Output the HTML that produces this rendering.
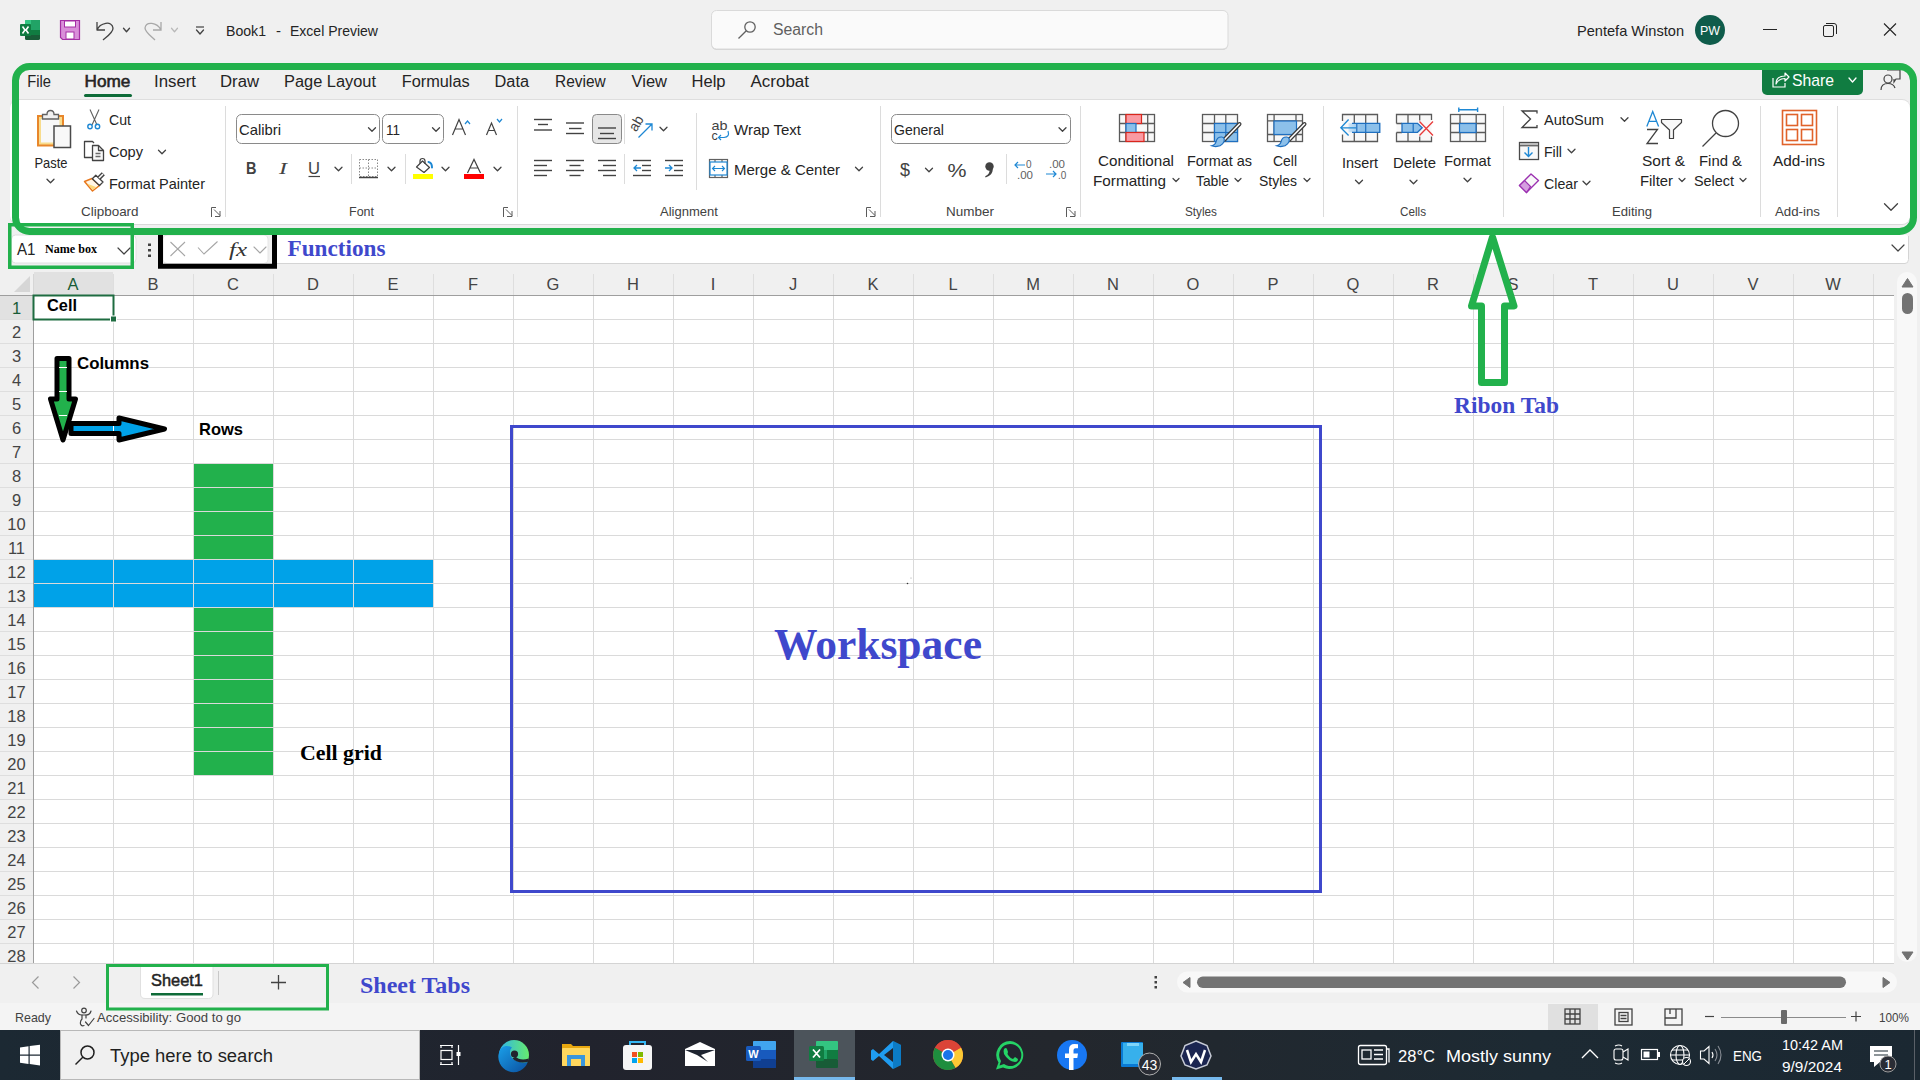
<!DOCTYPE html>
<html><head><meta charset="utf-8"><title>Excel</title>
<style>html,body{margin:0;padding:0;width:1920px;height:1080px;overflow:hidden;background:#f0f0f0;font-family:"Liberation Sans",sans-serif;}svg{display:block}</style>
</head><body>
<svg width="1920" height="1080" viewBox="0 0 1920 1080">
<rect x="0" y="0" width="1920" height="1080" fill="#f0f0f0" />
<g transform="translate(20,20)"><rect x="5" y="0" width="15" height="20" rx="1.5" fill="#185c37"/><rect x="5" y="0" width="15" height="5" rx="1" fill="#33c481"/><rect x="11" y="0" width="9" height="10" fill="#21a366"/><rect x="11" y="10" width="9" height="5" fill="#107c41"/><rect x="0" y="4" width="11" height="12" rx="1" fill="#107c41"/><path d="M2.5 6.5 L5 10 L2.5 13.5 M8.5 6.5 L6 10 L8.5 13.5" stroke="#fff" stroke-width="1.6" fill="none"/></g>
<g transform="translate(60,20)"><path d="M0.5 0.5 H19.5 V19.5 H2.5 L0.5 17.5 Z" fill="#d98fd9" stroke="#a52fa5" stroke-width="1.2"/><rect x="4.5" y="1" width="11" height="6" fill="#fff" stroke="#a52fa5" stroke-width="1"/><rect x="6" y="12" width="8" height="7" fill="#fff" stroke="#a52fa5" stroke-width="1"/></g>
<path d="M97 22 V30 H105 M97 30 C100 23 112 20 113 28 C113.5 32 108 36 103 40" fill="none" stroke="#424242" stroke-width="1.3" stroke-linejoin="round"/>
<path d="M123.5 28.25 L126.5 31.75 L129.5 28.25" fill="none" stroke="#424242" stroke-width="1.3" stroke-linecap="round" stroke-linejoin="round"/>
<path d="M161 22 V30 H153 M161 30 C157 22 146 21 145 28 C145 32 151 36 155 40" fill="none" stroke="#a8a8a8" stroke-width="1.3" />
<path d="M171.5 28.25 L174.5 31.75 L177.5 28.25" fill="none" stroke="#b8b8b8" stroke-width="1.2" stroke-linecap="round" stroke-linejoin="round"/>
<line x1="196" y1="27" x2="204" y2="27" stroke="#424242" stroke-width="1.2" />
<path d="M196.5 30.0 L200 34.0 L203.5 30.0" fill="none" stroke="#424242" stroke-width="1.3" stroke-linecap="round" stroke-linejoin="round"/>
<text x="226" y="36" font-family="Liberation Sans" font-size="15" fill="#242424" font-weight="normal" text-anchor="start" textLength="40" lengthAdjust="spacingAndGlyphs" >Book1</text>
<text x="276" y="36" font-family="Liberation Sans" font-size="15" fill="#242424" font-weight="normal" text-anchor="start" >-</text>
<text x="290" y="36" font-family="Liberation Sans" font-size="15" fill="#242424" font-weight="normal" text-anchor="start" textLength="88" lengthAdjust="spacingAndGlyphs" >Excel Preview</text>
<rect x="711.5" y="11.5" width="516.5" height="38.5" fill="#d2d2d2" rx="5" />
<rect x="711.5" y="10.5" width="516.5" height="38.5" fill="#fafafa" stroke="#dadada" stroke-width="1" rx="5" />
<g stroke="#616161" stroke-width="1.3" fill="none"><circle cx="750" cy="27" r="5.2"/><line x1="746.3" y1="30.7" x2="738.5" y2="38.5"/></g>
<text x="773" y="35" font-family="Liberation Sans" font-size="16" fill="#5f5f5f" font-weight="normal" text-anchor="start" textLength="50" lengthAdjust="spacingAndGlyphs" >Search</text>
<text x="1577" y="36" font-family="Liberation Sans" font-size="15" fill="#242424" font-weight="normal" text-anchor="start" textLength="107" lengthAdjust="spacingAndGlyphs" >Pentefa Winston</text>
<circle cx="1710" cy="30" r="15" fill="#0f5c4b"/>
<text x="1700" y="34.5" font-family="Liberation Sans" font-size="12.5" fill="#ffffff" font-weight="normal" text-anchor="start" textLength="20" lengthAdjust="spacingAndGlyphs" >PW</text>
<line x1="1763" y1="29.5" x2="1777" y2="29.5" stroke="#242424" stroke-width="1" />
<g fill="none" stroke="#242424" stroke-width="1"><rect x="1823.5" y="25.5" width="10" height="11" rx="1.5"/><path d="M1826 23.5 H1834 Q1836.5 23.5 1836.5 26 V34"/></g>
<path d="M1884 23.5 L1896 35.5 M1896 23.5 L1884 35.5" fill="none" stroke="#242424" stroke-width="1.1" />
<text x="27.3" y="87" font-family="Liberation Sans" font-size="16" fill="#242424" font-weight="normal" text-anchor="start" textLength="23.7" lengthAdjust="spacingAndGlyphs" >File</text>
<text x="84.6" y="87" font-family="Liberation Sans" font-size="16" fill="#242424" font-weight="normal" text-anchor="start" textLength="45.8" lengthAdjust="spacingAndGlyphs" stroke="#242424" stroke-width="0.55">Home</text>
<text x="154" y="87" font-family="Liberation Sans" font-size="16" fill="#242424" font-weight="normal" text-anchor="start" textLength="42" lengthAdjust="spacingAndGlyphs" >Insert</text>
<text x="220" y="87" font-family="Liberation Sans" font-size="16" fill="#242424" font-weight="normal" text-anchor="start" textLength="39" lengthAdjust="spacingAndGlyphs" >Draw</text>
<text x="284" y="87" font-family="Liberation Sans" font-size="16" fill="#242424" font-weight="normal" text-anchor="start" textLength="92" lengthAdjust="spacingAndGlyphs" >Page Layout</text>
<text x="401.7" y="87" font-family="Liberation Sans" font-size="16" fill="#242424" font-weight="normal" text-anchor="start" textLength="68" lengthAdjust="spacingAndGlyphs" >Formulas</text>
<text x="494.5" y="87" font-family="Liberation Sans" font-size="16" fill="#242424" font-weight="normal" text-anchor="start" textLength="34.5" lengthAdjust="spacingAndGlyphs" >Data</text>
<text x="555" y="87" font-family="Liberation Sans" font-size="16" fill="#242424" font-weight="normal" text-anchor="start" textLength="50.7" lengthAdjust="spacingAndGlyphs" >Review</text>
<text x="631.5" y="87" font-family="Liberation Sans" font-size="16" fill="#242424" font-weight="normal" text-anchor="start" textLength="35.5" lengthAdjust="spacingAndGlyphs" >View</text>
<text x="691.5" y="87" font-family="Liberation Sans" font-size="16" fill="#242424" font-weight="normal" text-anchor="start" textLength="34" lengthAdjust="spacingAndGlyphs" >Help</text>
<text x="750.5" y="87" font-family="Liberation Sans" font-size="16" fill="#242424" font-weight="normal" text-anchor="start" textLength="58.5" lengthAdjust="spacingAndGlyphs" >Acrobat</text>
<rect x="84" y="94" width="48" height="3" fill="#0e6b38" rx="1.5" />
<rect x="1762" y="64" width="101" height="31" fill="#107c41" rx="5" />
<g stroke="#fff" stroke-width="1.2" fill="none"><path d="M1773 78 V87 H1785 V83"/><path d="M1776 84 C1776 78 1780 76 1785 76 V73 L1789 77 L1785 81 V78.5 C1781 78.5 1778 80 1776 84 Z" stroke-linejoin="round"/></g>
<text x="1792" y="86" font-family="Liberation Sans" font-size="17" fill="#ffffff" font-weight="normal" text-anchor="start" textLength="42" lengthAdjust="spacingAndGlyphs" >Share</text>
<path d="M1849.0 78.0 L1852.5 82.0 L1856.0 78.0" fill="none" stroke="#ffffff" stroke-width="1.3" stroke-linecap="round" stroke-linejoin="round"/>
<g stroke="#424242" stroke-width="1.2" fill="none"><circle cx="1888" cy="79" r="4"/><path d="M1881 90 C1881 85 1884 83.5 1888 83.5 C1892 83.5 1894 85 1895 88"/><path d="M1887 70 H1900 V79 H1896 L1894 82 V79"/></g>
<rect x="10" y="101" width="1900" height="124" rx="8" fill="#d9d9d9"/>
<rect x="10" y="99" width="1900" height="125" fill="#dedede" rx="8" />
<rect x="10" y="100" width="1900" height="124" fill="#ffffff" rx="8" />
<line x1="225.5" y1="106" x2="225.5" y2="217" stroke="#dcdcdc" stroke-width="1" />
<line x1="517.5" y1="106" x2="517.5" y2="217" stroke="#dcdcdc" stroke-width="1" />
<line x1="880.5" y1="106" x2="880.5" y2="217" stroke="#dcdcdc" stroke-width="1" />
<line x1="1080.5" y1="106" x2="1080.5" y2="217" stroke="#dcdcdc" stroke-width="1" />
<line x1="1323.5" y1="106" x2="1323.5" y2="217" stroke="#dcdcdc" stroke-width="1" />
<line x1="1503.5" y1="106" x2="1503.5" y2="217" stroke="#dcdcdc" stroke-width="1" />
<line x1="1760.5" y1="106" x2="1760.5" y2="217" stroke="#dcdcdc" stroke-width="1" />
<line x1="1837.5" y1="106" x2="1837.5" y2="217" stroke="#dcdcdc" stroke-width="1" />
<text x="81" y="216" font-family="Liberation Sans" font-size="13" fill="#424242" font-weight="normal" text-anchor="start" textLength="57.6" lengthAdjust="spacingAndGlyphs" >Clipboard</text>
<text x="349" y="216" font-family="Liberation Sans" font-size="13" fill="#424242" font-weight="normal" text-anchor="start" textLength="25" lengthAdjust="spacingAndGlyphs" >Font</text>
<text x="660" y="216" font-family="Liberation Sans" font-size="13" fill="#424242" font-weight="normal" text-anchor="start" textLength="58" lengthAdjust="spacingAndGlyphs" >Alignment</text>
<text x="946" y="216" font-family="Liberation Sans" font-size="13" fill="#424242" font-weight="normal" text-anchor="start" textLength="48" lengthAdjust="spacingAndGlyphs" >Number</text>
<text x="1185" y="216" font-family="Liberation Sans" font-size="13" fill="#424242" font-weight="normal" text-anchor="start" textLength="32" lengthAdjust="spacingAndGlyphs" >Styles</text>
<text x="1400" y="216" font-family="Liberation Sans" font-size="13" fill="#424242" font-weight="normal" text-anchor="start" textLength="26" lengthAdjust="spacingAndGlyphs" >Cells</text>
<text x="1612" y="216" font-family="Liberation Sans" font-size="13" fill="#424242" font-weight="normal" text-anchor="start" textLength="40" lengthAdjust="spacingAndGlyphs" >Editing</text>
<text x="1775" y="216" font-family="Liberation Sans" font-size="13" fill="#424242" font-weight="normal" text-anchor="start" textLength="45" lengthAdjust="spacingAndGlyphs" >Add-ins</text>
<g stroke="#5a5a5a" stroke-width="1" fill="none"><path d="M211.5 217 V207.5 H216"/><path d="M214 209.5 L220 215.5 M220 211 V216.5 H215"/></g>
<g stroke="#5a5a5a" stroke-width="1" fill="none"><path d="M503.5 217 V207.5 H508"/><path d="M506 209.5 L512 215.5 M512 211 V216.5 H507"/></g>
<g stroke="#5a5a5a" stroke-width="1" fill="none"><path d="M866.5 217 V207.5 H871"/><path d="M869 209.5 L875 215.5 M875 211 V216.5 H870"/></g>
<g stroke="#5a5a5a" stroke-width="1" fill="none"><path d="M1066.5 217 V207.5 H1071"/><path d="M1069 209.5 L1075 215.5 M1075 211 V216.5 H1070"/></g>
<path d="M1884.5 203.75 L1891 210.25 L1897.5 203.75" fill="none" stroke="#424242" stroke-width="1.3" stroke-linecap="round" stroke-linejoin="round"/>
<g><rect x="38" y="116" width="25" height="29.5" fill="#f8dc8c" stroke="#e8862a" stroke-width="2"/><rect x="41" y="119" width="18.5" height="23.5" fill="#f8f8f8"/><path d="M42.5 119 V114.5 H47 Q47 110.5 50.5 110.5 Q54 110.5 54 114.5 H58.5 V119 Z" fill="#f0f0f0" stroke="#616161" stroke-width="1.3"/><rect x="54" y="126" width="16.5" height="21.5" fill="#f8f8f8" stroke="#4a4a4a" stroke-width="1.5"/></g>
<text x="34.5" y="168" font-family="Liberation Sans" font-size="15" fill="#242424" font-weight="normal" text-anchor="start" textLength="33" lengthAdjust="spacingAndGlyphs" >Paste</text>
<path d="M47.0 179.25 L50.5 182.75 L54.0 179.25" fill="none" stroke="#424242" stroke-width="1.3" stroke-linecap="round" stroke-linejoin="round"/>
<g stroke="#616161" stroke-width="1.1" fill="none"><path d="M90 109.5 L97 125 M99 109.5 L92 125"/></g><g stroke="#1e88d4" stroke-width="1.4" fill="none"><circle cx="90" cy="126.5" r="2.2"/><circle cx="97.5" cy="126.5" r="2.2"/></g>
<text x="109" y="125" font-family="Liberation Sans" font-size="15" fill="#242424" font-weight="normal" text-anchor="start" textLength="22" lengthAdjust="spacingAndGlyphs" >Cut</text>
<g stroke="#424242" stroke-width="1.3" fill="none" stroke-linejoin="round"><path d="M92.5 157.5 H84.5 V141.5 H92.5 L94 143"/><path d="M92.5 145.5 H98.5 L103.5 150.5 V160.5 H92.5 Z" fill="#f8f8f8"/><path d="M98.5 145.5 V150.5 H103.5"/><path d="M95.5 153.5 H100.5 M95.5 156.5 H100.5" stroke="#6a6a6a"/></g>
<text x="109" y="157" font-family="Liberation Sans" font-size="15" fill="#242424" font-weight="normal" text-anchor="start" textLength="34" lengthAdjust="spacingAndGlyphs" >Copy</text>
<path d="M158.5 150.25 L162 153.75 L165.5 150.25" fill="none" stroke="#424242" stroke-width="1.3" stroke-linecap="round" stroke-linejoin="round"/>
<g stroke-linejoin="round"><path d="M84.5 181.5 L92 178.5 L99.5 185.5 L92.5 191 Z" fill="#fff6e6" stroke="#e8781e" stroke-width="1.5"/><path d="M87 183.5 L96.5 187.2 L92.5 189.8 Z" fill="#fcd87a"/><path d="M92.3 178.7 L95.8 175.2 L103 182 L99.5 185.5 Z" fill="#fff" stroke="#424242" stroke-width="1.3"/><path d="M98.8 178.3 L103.3 173.8" stroke="#424242" stroke-width="4.4"/><path d="M99 178 L103 174" stroke="#ffffff" stroke-width="1.6"/></g>
<text x="109" y="189" font-family="Liberation Sans" font-size="15" fill="#242424" font-weight="normal" text-anchor="start" textLength="96" lengthAdjust="spacingAndGlyphs" >Format Painter</text>
<rect x="236.5" y="114.5" width="143" height="29" fill="#fff" stroke="#8a8a8a" stroke-width="1" rx="5" />
<text x="239" y="135" font-family="Liberation Sans" font-size="15" fill="#242424" font-weight="normal" text-anchor="start" textLength="42" lengthAdjust="spacingAndGlyphs" >Calibri</text>
<path d="M368.5 127.75 L372 131.25 L375.5 127.75" fill="none" stroke="#424242" stroke-width="1.3" stroke-linecap="round" stroke-linejoin="round"/>
<rect x="382.5" y="114.5" width="61" height="29" fill="#fff" stroke="#8a8a8a" stroke-width="1" rx="5" />
<text x="386" y="135" font-family="Liberation Sans" font-size="15" fill="#242424" font-weight="normal" text-anchor="start" textLength="14" lengthAdjust="spacingAndGlyphs" >11</text>
<path d="M432.5 127.75 L436 131.25 L439.5 127.75" fill="none" stroke="#424242" stroke-width="1.3" stroke-linecap="round" stroke-linejoin="round"/>
<path d="M452.5 135 L459 119.5 L465.5 135 M455 129 H463" fill="none" stroke="#424242" stroke-width="1.2" />
<path d="M465 124 L467.5 121 L470 124" fill="none" stroke="#1e88d4" stroke-width="1.2" />
<path d="M486.5 135 L491.5 123 L496.5 135 M488.5 130.5 H494.5" fill="none" stroke="#424242" stroke-width="1.2" />
<path d="M497 119 L499.5 122 L502 119" fill="none" stroke="#1e88d4" stroke-width="1.2" />
<text x="246" y="173.5" font-family="Liberation Sans" font-size="17" fill="#424242" font-weight="bold" text-anchor="start" textLength="10.5" lengthAdjust="spacingAndGlyphs" >B</text>
<text x="279" y="173.5" font-family="Liberation Serif" font-size="17" fill="#424242" font-weight="normal" text-anchor="start" textLength="8" lengthAdjust="spacingAndGlyphs" font-style="italic" >I</text>
<text x="308" y="173.5" font-family="Liberation Sans" font-size="16" fill="#424242" font-weight="normal" text-anchor="start" textLength="12" lengthAdjust="spacingAndGlyphs" >U</text>
<line x1="308.5" y1="176.5" x2="320" y2="176.5" stroke="#424242" stroke-width="1.2" />
<path d="M335.0 167.25 L338.5 170.75 L342.0 167.25" fill="none" stroke="#424242" stroke-width="1.3" stroke-linecap="round" stroke-linejoin="round"/>
<line x1="351.5" y1="154" x2="351.5" y2="184" stroke="#dcdcdc" stroke-width="1" />
<g stroke="#8a8a8a" stroke-width="1" stroke-dasharray="1.5 1.5" fill="none"><rect x="359.5" y="159.5" width="18" height="17"/><line x1="368.5" y1="159.5" x2="368.5" y2="176.5"/><line x1="359.5" y1="168" x2="377.5" y2="168"/></g>
<line x1="359" y1="177.5" x2="378" y2="177.5" stroke="#424242" stroke-width="1.5" />
<path d="M388.0 167.25 L391.5 170.75 L395.0 167.25" fill="none" stroke="#424242" stroke-width="1.3" stroke-linecap="round" stroke-linejoin="round"/>
<line x1="405.5" y1="154" x2="405.5" y2="184" stroke="#dcdcdc" stroke-width="1" />
<path d="M416.5 167 L422.5 161 L429.5 167.5 L424 172.5 Z" fill="#fff" stroke="#424242" stroke-width="1.2" stroke-linejoin="round"/><path d="M420 163.5 V161 Q420 158.5 422.5 158.5 Q425 158.5 425 161 V164" fill="none" stroke="#424242" stroke-width="1.2"/><path d="M428.5 162 Q432 162.5 432 167.5" stroke="#1e88d4" stroke-width="2" fill="none" stroke-linecap="round"/>
<rect x="413" y="174" width="20" height="5" fill="#ffff00" />
<path d="M442.0 167.25 L445.5 170.75 L449.0 167.25" fill="none" stroke="#424242" stroke-width="1.3" stroke-linecap="round" stroke-linejoin="round"/>
<path d="M467.5 173 L474 159.5 L480.5 173 M470 168 H478" fill="none" stroke="#424242" stroke-width="1.2" />
<rect x="464" y="174" width="20" height="5" fill="#ff0000" />
<path d="M494.0 167.25 L497.5 170.75 L501.0 167.25" fill="none" stroke="#424242" stroke-width="1.3" stroke-linecap="round" stroke-linejoin="round"/>
<line x1="534" y1="119.5" x2="552" y2="119.5" stroke="#424242" stroke-width="1.4" />
<line x1="538" y1="124.5" x2="548" y2="124.5" stroke="#424242" stroke-width="1.4" />
<line x1="534" y1="130" x2="552" y2="130" stroke="#424242" stroke-width="1.4" />
<line x1="566" y1="123" x2="584" y2="123" stroke="#424242" stroke-width="1.4" />
<line x1="569" y1="128.5" x2="581.5" y2="128.5" stroke="#424242" stroke-width="1.4" />
<line x1="566" y1="133.5" x2="584" y2="133.5" stroke="#424242" stroke-width="1.4" />
<rect x="592.5" y="114.5" width="29" height="29" fill="#e6e6e6" stroke="#8a8a8a" stroke-width="1" rx="4" />
<line x1="598" y1="128" x2="616" y2="128" stroke="#424242" stroke-width="1.4" />
<line x1="600" y1="133.5" x2="614" y2="133.5" stroke="#424242" stroke-width="1.4" />
<line x1="598" y1="138.5" x2="616" y2="138.5" stroke="#424242" stroke-width="1.4" />
<line x1="624.5" y1="114" x2="624.5" y2="144" stroke="#dcdcdc" stroke-width="1" />
<text x="628.5" y="129" font-family="Liberation Sans" font-size="14" fill="#424242" font-weight="normal" text-anchor="start" transform="rotate(-60 635.5 124)">ab</text>
<path d="M638.5 137.5 L651.5 124.5 M645.5 124 H652 V130.5" fill="none" stroke="#1e88d4" stroke-width="1.3" />
<path d="M660.0 127.25 L663.5 130.75 L667.0 127.25" fill="none" stroke="#424242" stroke-width="1.3" stroke-linecap="round" stroke-linejoin="round"/>
<line x1="696.5" y1="113" x2="696.5" y2="190" stroke="#dcdcdc" stroke-width="1" />
<text x="711.5" y="130" font-family="Liberation Sans" font-size="13" fill="#424242" font-weight="normal" text-anchor="start" textLength="16" lengthAdjust="spacingAndGlyphs" >ab</text>
<text x="711.5" y="139.5" font-family="Liberation Sans" font-size="12.5" fill="#424242" font-weight="normal" text-anchor="start" >c</text>
<path d="M728 131 Q730 137 724 137.5 H719 M721 135 L718.5 137.5 L721 140" fill="none" stroke="#1e88d4" stroke-width="1.2" />
<text x="734" y="135" font-family="Liberation Sans" font-size="15" fill="#242424" font-weight="normal" text-anchor="start" textLength="67" lengthAdjust="spacingAndGlyphs" >Wrap Text</text>
<line x1="534" y1="160.5" x2="552" y2="160.5" stroke="#424242" stroke-width="1.4" />
<line x1="534" y1="165.5" x2="547" y2="165.5" stroke="#424242" stroke-width="1.4" />
<line x1="534" y1="170.5" x2="552" y2="170.5" stroke="#424242" stroke-width="1.4" />
<line x1="534" y1="175.5" x2="547" y2="175.5" stroke="#424242" stroke-width="1.4" />
<line x1="566" y1="160.5" x2="584" y2="160.5" stroke="#424242" stroke-width="1.4" />
<line x1="569.5" y1="165.5" x2="580.5" y2="165.5" stroke="#424242" stroke-width="1.4" />
<line x1="566" y1="170.5" x2="584" y2="170.5" stroke="#424242" stroke-width="1.4" />
<line x1="569.5" y1="175.5" x2="580.5" y2="175.5" stroke="#424242" stroke-width="1.4" />
<line x1="598" y1="160.5" x2="616" y2="160.5" stroke="#424242" stroke-width="1.4" />
<line x1="603" y1="165.5" x2="616" y2="165.5" stroke="#424242" stroke-width="1.4" />
<line x1="598" y1="170.5" x2="616" y2="170.5" stroke="#424242" stroke-width="1.4" />
<line x1="603" y1="175.5" x2="616" y2="175.5" stroke="#424242" stroke-width="1.4" />
<line x1="624.5" y1="154" x2="624.5" y2="184" stroke="#dcdcdc" stroke-width="1" />
<line x1="633" y1="160.5" x2="651" y2="160.5" stroke="#424242" stroke-width="1.4" />
<line x1="642" y1="165.5" x2="651" y2="165.5" stroke="#424242" stroke-width="1.4" />
<line x1="642" y1="170.5" x2="651" y2="170.5" stroke="#424242" stroke-width="1.4" />
<line x1="633" y1="175.5" x2="651" y2="175.5" stroke="#424242" stroke-width="1.4" />
<path d="M641 168 H634 M637 165 L634 168 L637 171" fill="none" stroke="#1e88d4" stroke-width="1.3" />
<line x1="665" y1="160.5" x2="683" y2="160.5" stroke="#424242" stroke-width="1.4" />
<line x1="674" y1="165.5" x2="683" y2="165.5" stroke="#424242" stroke-width="1.4" />
<line x1="674" y1="170.5" x2="683" y2="170.5" stroke="#424242" stroke-width="1.4" />
<line x1="665" y1="175.5" x2="683" y2="175.5" stroke="#424242" stroke-width="1.4" />
<path d="M665 168 H672 M669 165 L672 168 L669 171" fill="none" stroke="#1e88d4" stroke-width="1.3" />
<g fill="none" stroke="#616161" stroke-width="1.2"><rect x="709.5" y="159.5" width="18" height="18"/><line x1="715" y1="159.5" x2="715" y2="162"/><line x1="722" y1="159.5" x2="722" y2="162"/><line x1="715" y1="175" x2="715" y2="177.5"/><line x1="722" y1="175" x2="722" y2="177.5"/></g>
<rect x="710" y="162" width="17" height="13" fill="#fff" stroke="#1e88d4" stroke-width="1.2" />
<path d="M712.5 168.5 H724.5 M715 166 L712.5 168.5 L715 171 M722 166 L724.5 168.5 L722 171" fill="none" stroke="#1e88d4" stroke-width="1.1" />
<text x="734" y="175" font-family="Liberation Sans" font-size="15" fill="#242424" font-weight="normal" text-anchor="start" textLength="106" lengthAdjust="spacingAndGlyphs" >Merge &amp; Center</text>
<path d="M855.5 167.25 L859 170.75 L862.5 167.25" fill="none" stroke="#424242" stroke-width="1.3" stroke-linecap="round" stroke-linejoin="round"/>
<rect x="891.5" y="114.5" width="179" height="29" fill="#fff" stroke="#8a8a8a" stroke-width="1" rx="5" />
<text x="894" y="135" font-family="Liberation Sans" font-size="15" fill="#242424" font-weight="normal" text-anchor="start" textLength="50" lengthAdjust="spacingAndGlyphs" >General</text>
<path d="M1059.0 127.75 L1062.5 131.25 L1066.0 127.75" fill="none" stroke="#424242" stroke-width="1.3" stroke-linecap="round" stroke-linejoin="round"/>
<text x="900" y="176" font-family="Liberation Sans" font-size="19" fill="#424242" font-weight="normal" text-anchor="start" textLength="10" lengthAdjust="spacingAndGlyphs" >$</text>
<path d="M925.5 168.25 L929 171.75 L932.5 168.25" fill="none" stroke="#424242" stroke-width="1.3" stroke-linecap="round" stroke-linejoin="round"/>
<text x="947.5" y="177" font-family="Liberation Sans" font-size="19" fill="#424242" font-weight="normal" text-anchor="start" textLength="19" lengthAdjust="spacingAndGlyphs" >%</text>
<circle cx="989.5" cy="166.5" r="4.2" fill="#424242"/><path d="M992.5 168 C993.5 172.5 990.5 176 985.5 177.5 L985.2 176.3 C988.5 174.8 989.8 172.5 989.5 170 Z" fill="#424242"/>
<line x1="1006.5" y1="154" x2="1006.5" y2="184" stroke="#dcdcdc" stroke-width="1" />
<text x="1026" y="168" font-family="Liberation Sans" font-size="10" fill="#616161" font-weight="normal" text-anchor="start" >0</text>
<text x="1017" y="178.5" font-family="Liberation Sans" font-size="10" fill="#616161" font-weight="normal" text-anchor="start" textLength="16" lengthAdjust="spacingAndGlyphs" >.00</text>
<path d="M1015 165 H1025 M1018 162 L1015 165 L1018 168" fill="none" stroke="#1e88d4" stroke-width="1.2" />
<text x="1049" y="168" font-family="Liberation Sans" font-size="10" fill="#616161" font-weight="normal" text-anchor="start" textLength="16" lengthAdjust="spacingAndGlyphs" >.00</text>
<text x="1058" y="178.5" font-family="Liberation Sans" font-size="10" fill="#616161" font-weight="normal" text-anchor="start" >.0</text>
<path d="M1046 174 H1056 M1053 171 L1056 174 L1053 177" fill="none" stroke="#1e88d4" stroke-width="1.2" />
<rect x="1119.5" y="114.5" width="35" height="27" fill="#f8f8f8" stroke="#5a5a5a" stroke-width="1.3" />
<line x1="1147.7" y1="114.5" x2="1147.7" y2="141.5" stroke="#5a5a5a" stroke-width="1.3" />
<line x1="1119.5" y1="123.5" x2="1154.5" y2="123.5" stroke="#5a5a5a" stroke-width="1.3" />
<line x1="1119.5" y1="132.5" x2="1154.5" y2="132.5" stroke="#5a5a5a" stroke-width="1.3" />
<line x1="1126" y1="114.5" x2="1126" y2="141.5" stroke="#5a5a5a" stroke-width="1.3" />
<rect x="1126" y="114.5" width="15.5" height="9" fill="#fa9aa2" stroke="#d9261c" stroke-width="1.2" />
<rect x="1126" y="123.5" width="10" height="9" fill="#8cc0ea" stroke="#1e6fc0" stroke-width="1.2" />
<rect x="1126" y="132.5" width="18" height="9" fill="#fa9aa2" stroke="#d9261c" stroke-width="1.2" />
<text x="1098" y="166" font-family="Liberation Sans" font-size="15" fill="#242424" font-weight="normal" text-anchor="start" textLength="76" lengthAdjust="spacingAndGlyphs" >Conditional</text>
<text x="1093" y="186" font-family="Liberation Sans" font-size="15" fill="#242424" font-weight="normal" text-anchor="start" textLength="73" lengthAdjust="spacingAndGlyphs" >Formatting</text>
<path d="M1173.0 178.5 L1176 181.5 L1179.0 178.5" fill="none" stroke="#424242" stroke-width="1.2" stroke-linecap="round" stroke-linejoin="round"/>
<rect x="1202.5" y="114.5" width="35" height="27" fill="#f8f8f8" stroke="#5a5a5a" stroke-width="1.3" />
<line x1="1214.5" y1="114.5" x2="1214.5" y2="141.5" stroke="#5a5a5a" stroke-width="1.3" />
<line x1="1225.8" y1="114.5" x2="1225.8" y2="141.5" stroke="#5a5a5a" stroke-width="1.3" />
<line x1="1202.5" y1="123.5" x2="1237.5" y2="123.5" stroke="#5a5a5a" stroke-width="1.3" />
<line x1="1202.5" y1="132.5" x2="1237.5" y2="132.5" stroke="#5a5a5a" stroke-width="1.3" />
<rect x="1214.5" y="123.5" width="23" height="18" fill="#8cc0ea" stroke="#1e6fc0" stroke-width="1.2" />
<line x1="1225.8" y1="123.5" x2="1225.8" y2="141.5" stroke="#1e6fc0" stroke-width="1.2" />
<line x1="1214.5" y1="132.5" x2="1237.5" y2="132.5" stroke="#1e6fc0" stroke-width="1.2" />
<path d="M1239.5 124 L1224 140" fill="none" stroke="#3a3a3a" stroke-width="4" stroke-linecap="round"/>
<path d="M1239.5 124 L1224 140" fill="none" stroke="#ffffff" stroke-width="1.6" stroke-linecap="round"/>
<path d="M1211.5 145.8 C 1214.5 147, 1219.5 147, 1222.5 143.8 C 1225.5 140.8, 1224.5 137.2, 1221.8 137 C 1218.5 136.8, 1216.5 139.5, 1216 141.8 C 1215.5 144, 1214 145.2, 1211.5 145.8 Z" fill="#8cc0ea" stroke="#1e6fc0" stroke-width="1.2" />
<text x="1187" y="166" font-family="Liberation Sans" font-size="15" fill="#242424" font-weight="normal" text-anchor="start" textLength="65" lengthAdjust="spacingAndGlyphs" >Format as</text>
<text x="1196" y="186" font-family="Liberation Sans" font-size="15" fill="#242424" font-weight="normal" text-anchor="start" textLength="33" lengthAdjust="spacingAndGlyphs" >Table</text>
<path d="M1235.0 178.5 L1238 181.5 L1241.0 178.5" fill="none" stroke="#424242" stroke-width="1.2" stroke-linecap="round" stroke-linejoin="round"/>
<rect x="1267.5" y="114.5" width="35" height="27" fill="#f8f8f8" stroke="#5a5a5a" stroke-width="1.3" />
<line x1="1274.1" y1="114.5" x2="1274.1" y2="141.5" stroke="#5a5a5a" stroke-width="1.3" />
<line x1="1296.0" y1="114.5" x2="1296.0" y2="141.5" stroke="#5a5a5a" stroke-width="1.3" />
<line x1="1267.5" y1="120.9" x2="1302.5" y2="120.9" stroke="#5a5a5a" stroke-width="1.3" />
<line x1="1267.5" y1="134.5" x2="1302.5" y2="134.5" stroke="#5a5a5a" stroke-width="1.3" />
<rect x="1274" y="121" width="22.5" height="13.5" fill="#8cc0ea" stroke="#1e6fc0" stroke-width="1.2" />
<path d="M1304.5 124 L1289 140" fill="none" stroke="#3a3a3a" stroke-width="4" stroke-linecap="round"/>
<path d="M1304.5 124 L1289 140" fill="none" stroke="#ffffff" stroke-width="1.6" stroke-linecap="round"/>
<path d="M1276.5 145.8 C 1279.5 147, 1284.5 147, 1287.5 143.8 C 1290.5 140.8, 1289.5 137.2, 1286.8 137 C 1283.5 136.8, 1281.5 139.5, 1281 141.8 C 1280.5 144, 1279 145.2, 1276.5 145.8 Z" fill="#8cc0ea" stroke="#1e6fc0" stroke-width="1.2" />
<text x="1273" y="166" font-family="Liberation Sans" font-size="15" fill="#242424" font-weight="normal" text-anchor="start" textLength="24" lengthAdjust="spacingAndGlyphs" >Cell</text>
<text x="1259" y="186" font-family="Liberation Sans" font-size="15" fill="#242424" font-weight="normal" text-anchor="start" textLength="38" lengthAdjust="spacingAndGlyphs" >Styles</text>
<path d="M1304.0 178.5 L1307 181.5 L1310.0 178.5" fill="none" stroke="#424242" stroke-width="1.2" stroke-linecap="round" stroke-linejoin="round"/>
<defs><linearGradient id="insg" x1="0" x2="1" y1="0" y2="0"><stop offset="0" stop-color="#cfe6f8"/><stop offset="0.4" stop-color="#8cc0ea"/><stop offset="1" stop-color="#8cc0ea"/></linearGradient></defs>
<rect x="1342.5" y="114.5" width="35" height="27" fill="#f8f8f8" />
<g stroke="#5a5a5a" stroke-width="1.3" fill="none"><path d="M1342.5 121 V114.5 H1377.5 V141.5 H1342.5 V134.5"/><path d="M1354.3 114.5 V141.5 M1365.7 114.5 V141.5"/></g>
<path d="M1348.5 123.3 H1379.8 V132.3 H1348.5 Z" fill="url(#insg)" />
<path d="M1352 123.3 H1379.8 V132.3 H1352" fill="none" stroke="#1e6fc0" stroke-width="1.3" />
<line x1="1356.8" y1="123.3" x2="1356.8" y2="132.3" stroke="#1e6fc0" stroke-width="1.2" />
<line x1="1365.7" y1="123.3" x2="1365.7" y2="132.3" stroke="#1e6fc0" stroke-width="1.2" />
<path d="M1356 127.8 H1341 M1348.6 119.5 L1340.8 127.8 L1348.6 135.5" fill="none" stroke="#1e88d4" stroke-width="1.3" stroke-linejoin="miter"/>
<text x="1342" y="168" font-family="Liberation Sans" font-size="15" fill="#242424" font-weight="normal" text-anchor="start" textLength="36" lengthAdjust="spacingAndGlyphs" >Insert</text>
<path d="M1355.5 180.25 L1359 183.75 L1362.5 180.25" fill="none" stroke="#424242" stroke-width="1.3" stroke-linecap="round" stroke-linejoin="round"/>
<rect x="1396.5" y="114.5" width="35" height="27" fill="#f8f8f8" />
<g stroke="#5a5a5a" stroke-width="1.3" fill="none"><path d="M1396.5 123.5 V114.5 H1431.5 V120 M1431.5 136.5 V141.5 H1396.5 V132.5"/><path d="M1396.5 123.5 H1402 M1396.5 132.5 H1402"/><path d="M1408 114.5 V141.5 M1419.7 114.5 V120.5 M1419.7 136.5 V141.5"/></g>
<path d="M1402 123.3 H1417.5 L1422.2 127.8 L1417.5 132.3 H1402 Z" fill="#8cc0ea" stroke="#1e6fc0" stroke-width="1.3" />
<line x1="1413.2" y1="123.3" x2="1413.2" y2="132.3" stroke="#1e6fc0" stroke-width="1.2" />
<path d="M1419.5 121.5 L1433 135.5 M1433 121.5 L1419.5 135.5" fill="none" stroke="#e83a3a" stroke-width="1.3" />
<text x="1393" y="168" font-family="Liberation Sans" font-size="15" fill="#242424" font-weight="normal" text-anchor="start" textLength="43" lengthAdjust="spacingAndGlyphs" >Delete</text>
<path d="M1410.0 180.25 L1413.5 183.75 L1417.0 180.25" fill="none" stroke="#424242" stroke-width="1.3" stroke-linecap="round" stroke-linejoin="round"/>
<rect x="1450.5" y="114.5" width="35" height="27" fill="#f8f8f8" stroke="#5a5a5a" stroke-width="1.3" />
<line x1="1460.0" y1="114.5" x2="1460.0" y2="141.5" stroke="#5a5a5a" stroke-width="1.3" />
<line x1="1476.2" y1="114.5" x2="1476.2" y2="141.5" stroke="#5a5a5a" stroke-width="1.3" />
<line x1="1450.5" y1="123.5" x2="1485.5" y2="123.5" stroke="#5a5a5a" stroke-width="1.3" />
<line x1="1450.5" y1="132.5" x2="1485.5" y2="132.5" stroke="#5a5a5a" stroke-width="1.3" />
<rect x="1459.5" y="123.5" width="16.5" height="9" fill="#8cc0ea" stroke="#1e6fc0" stroke-width="1.2" />
<path d="M1458.8 107.5 V112 M1477.6 107.5 V112 M1458.8 109.8 H1477.6" fill="none" stroke="#1e88d4" stroke-width="1.4" />
<text x="1444" y="166" font-family="Liberation Sans" font-size="15" fill="#242424" font-weight="normal" text-anchor="start" textLength="47" lengthAdjust="spacingAndGlyphs" >Format</text>
<path d="M1464.0 178.25 L1467.5 181.75 L1471.0 178.25" fill="none" stroke="#424242" stroke-width="1.3" stroke-linecap="round" stroke-linejoin="round"/>
<path d="M1537 113.5 V111 H1522 L1530.5 119 L1522 127.5 H1537 V125" fill="none" stroke="#424242" stroke-width="1.3" stroke-linejoin="miter"/>
<text x="1544" y="125" font-family="Liberation Sans" font-size="15" fill="#242424" font-weight="normal" text-anchor="start" textLength="60" lengthAdjust="spacingAndGlyphs" >AutoSum</text>
<path d="M1621.0 117.75 L1624.5 121.25 L1628.0 117.75" fill="none" stroke="#424242" stroke-width="1.3" stroke-linecap="round" stroke-linejoin="round"/>
<rect x="1519.5" y="142.5" width="19" height="17" fill="#f8f8f8" stroke="#4a4a4a" stroke-width="1.3" />
<rect x="1520" y="143" width="18" height="2.8" fill="#bcbcbc" />
<line x1="1519.5" y1="145.8" x2="1538.5" y2="145.8" stroke="#4a4a4a" stroke-width="1.1" />
<path d="M1528.5 147 V156.5 M1524.5 152.5 L1528.5 156.5 L1532.5 152.5" fill="none" stroke="#1e88d4" stroke-width="1.4" />
<text x="1544" y="157" font-family="Liberation Sans" font-size="15" fill="#242424" font-weight="normal" text-anchor="start" textLength="18" lengthAdjust="spacingAndGlyphs" >Fill</text>
<path d="M1568.0 149.25 L1571.5 152.75 L1575.0 149.25" fill="none" stroke="#424242" stroke-width="1.3" stroke-linecap="round" stroke-linejoin="round"/>
<path d="M1519.5 185.5 L1531 174 L1538.5 180.5 L1526.5 192.5 Z" fill="#f8f8f8" stroke="#9b30b0" stroke-width="1.4" stroke-linejoin="round"/>
<path d="M1519.5 185.5 L1524.6 180.6 L1530.6 186.6 L1526.5 192.5 Z" fill="#d59ee0" stroke="#9b30b0" stroke-width="1.2" />
<text x="1544" y="189" font-family="Liberation Sans" font-size="15" fill="#242424" font-weight="normal" text-anchor="start" textLength="34" lengthAdjust="spacingAndGlyphs" >Clear</text>
<path d="M1583.0 181.25 L1586.5 184.75 L1590.0 181.25" fill="none" stroke="#424242" stroke-width="1.3" stroke-linecap="round" stroke-linejoin="round"/>
<path d="M1646.8 126.5 L1652.7 111.5 L1658.6 126.5 M1648.8 121.3 H1656.6" fill="none" stroke="#1e88d4" stroke-width="1.3" />
<path d="M1647 129.5 H1657.5 L1647 143.5 H1658" fill="none" stroke="#424242" stroke-width="1.3" />
<path d="M1661.5 119.5 H1681.5 V122.5 L1673.5 130 V138.5 H1669.5 V130 L1661.5 122.5 Z" fill="#f8f8f8" stroke="#424242" stroke-width="1.2" stroke-linejoin="round"/>
<text x="1642" y="166" font-family="Liberation Sans" font-size="15" fill="#242424" font-weight="normal" text-anchor="start" textLength="43" lengthAdjust="spacingAndGlyphs" >Sort &amp;</text>
<text x="1640" y="186" font-family="Liberation Sans" font-size="15" fill="#242424" font-weight="normal" text-anchor="start" textLength="33" lengthAdjust="spacingAndGlyphs" >Filter</text>
<path d="M1679.0 178.5 L1682 181.5 L1685.0 178.5" fill="none" stroke="#424242" stroke-width="1.2" stroke-linecap="round" stroke-linejoin="round"/>
<circle cx="1725.5" cy="123.5" r="13" fill="#fff" stroke="#424242" stroke-width="1.3"/>
<line x1="1716" y1="133" x2="1702.5" y2="146.5" stroke="#424242" stroke-width="1.3" />
<text x="1699" y="166" font-family="Liberation Sans" font-size="15" fill="#242424" font-weight="normal" text-anchor="start" textLength="43" lengthAdjust="spacingAndGlyphs" >Find &amp;</text>
<text x="1694" y="186" font-family="Liberation Sans" font-size="15" fill="#242424" font-weight="normal" text-anchor="start" textLength="40" lengthAdjust="spacingAndGlyphs" >Select</text>
<path d="M1740.0 178.5 L1743 181.5 L1746.0 178.5" fill="none" stroke="#424242" stroke-width="1.2" stroke-linecap="round" stroke-linejoin="round"/>
<g fill="none" stroke="#e0622a" stroke-width="1.6"><rect x="1782.5" y="110.5" width="34" height="34"/><rect x="1786.5" y="114.5" width="11" height="11"/><rect x="1801.5" y="114.5" width="11" height="11"/><rect x="1786.5" y="129.5" width="11" height="11"/><rect x="1801.5" y="129.5" width="11" height="11"/></g>
<text x="1773" y="166" font-family="Liberation Sans" font-size="15" fill="#242424" font-weight="normal" text-anchor="start" textLength="52" lengthAdjust="spacingAndGlyphs" >Add-ins</text>
<rect x="11.5" y="235" width="124.5" height="28" fill="#fff" stroke="#e0e0e0" stroke-width="1" rx="4" />
<text x="17" y="255.2" font-family="Liberation Sans" font-size="16" fill="#242424" font-weight="normal" text-anchor="start" textLength="18.5" lengthAdjust="spacingAndGlyphs" >A1</text>
<text x="45" y="253.2" font-family="Liberation Serif" font-size="13" fill="#000" font-weight="bold" text-anchor="start" textLength="52" lengthAdjust="spacingAndGlyphs" >Name box</text>
<path d="M118.0 248.0 L124 254.0 L130.0 248.0" fill="none" stroke="#424242" stroke-width="1.2" stroke-linecap="round" stroke-linejoin="round"/>
<rect x="148" y="243.5" width="3" height="2.5" fill="#424242" />
<rect x="148" y="249" width="3" height="2.5" fill="#424242" />
<rect x="148" y="254.5" width="3" height="2.5" fill="#424242" />
<rect x="163" y="235" width="105" height="28.5" fill="#fff" stroke="#e6e6e6" stroke-width="1" rx="4" />
<path d="M170.5 242 L185 256 M185 242 L170.5 256" fill="none" stroke="#a6a6a6" stroke-width="1.1" />
<path d="M198 247.5 L204 254 L217.5 241.5" fill="none" stroke="#a6a6a6" stroke-width="1.1" />
<text x="229" y="256" font-family="Liberation Serif" font-size="19" fill="#333" font-weight="normal" text-anchor="start" textLength="18" lengthAdjust="spacingAndGlyphs" font-style="italic" >fx</text>
<path d="M254.0 247.0 L260 253.0 L266.0 247.0" fill="none" stroke="#a6a6a6" stroke-width="1.1" stroke-linecap="round" stroke-linejoin="round"/>
<path d="M277 235 H1905 Q1909 235 1909 239 V259 Q1909 263.5 1905 263.5 H277 Z" fill="#fff"/>
<path d="M277 263.5 H1905 Q1908.5 263.5 1908.5 259.5 V236" fill="none" stroke="#d4d4d4" stroke-width="1"/>
<path d="M1892.0 245.0 L1898 251.0 L1904.0 245.0" fill="none" stroke="#424242" stroke-width="1.2" stroke-linecap="round" stroke-linejoin="round"/>
<text x="287.5" y="256" font-family="Liberation Serif" font-size="23" fill="#3f48cc" font-weight="bold" text-anchor="start" textLength="98" lengthAdjust="spacingAndGlyphs" >Functions</text>
<rect x="0" y="272" width="1894" height="23" fill="#f0f0f0" />
<rect x="34" y="272" width="79" height="23" fill="#e1e1e1" />
<path d="M14 292 L30 276 V292 Z" fill="#d6d6d6"/>
<text x="73" y="290" font-family="Liberation Sans" font-size="16.5" fill="#185c37" font-weight="normal" text-anchor="middle" >A</text>
<text x="153" y="290" font-family="Liberation Sans" font-size="16.5" fill="#444444" font-weight="normal" text-anchor="middle" >B</text>
<text x="233" y="290" font-family="Liberation Sans" font-size="16.5" fill="#444444" font-weight="normal" text-anchor="middle" >C</text>
<text x="313" y="290" font-family="Liberation Sans" font-size="16.5" fill="#444444" font-weight="normal" text-anchor="middle" >D</text>
<text x="393" y="290" font-family="Liberation Sans" font-size="16.5" fill="#444444" font-weight="normal" text-anchor="middle" >E</text>
<text x="473" y="290" font-family="Liberation Sans" font-size="16.5" fill="#444444" font-weight="normal" text-anchor="middle" >F</text>
<text x="553" y="290" font-family="Liberation Sans" font-size="16.5" fill="#444444" font-weight="normal" text-anchor="middle" >G</text>
<text x="633" y="290" font-family="Liberation Sans" font-size="16.5" fill="#444444" font-weight="normal" text-anchor="middle" >H</text>
<text x="713" y="290" font-family="Liberation Sans" font-size="16.5" fill="#444444" font-weight="normal" text-anchor="middle" >I</text>
<text x="793" y="290" font-family="Liberation Sans" font-size="16.5" fill="#444444" font-weight="normal" text-anchor="middle" >J</text>
<text x="873" y="290" font-family="Liberation Sans" font-size="16.5" fill="#444444" font-weight="normal" text-anchor="middle" >K</text>
<text x="953" y="290" font-family="Liberation Sans" font-size="16.5" fill="#444444" font-weight="normal" text-anchor="middle" >L</text>
<text x="1033" y="290" font-family="Liberation Sans" font-size="16.5" fill="#444444" font-weight="normal" text-anchor="middle" >M</text>
<text x="1113" y="290" font-family="Liberation Sans" font-size="16.5" fill="#444444" font-weight="normal" text-anchor="middle" >N</text>
<text x="1193" y="290" font-family="Liberation Sans" font-size="16.5" fill="#444444" font-weight="normal" text-anchor="middle" >O</text>
<text x="1273" y="290" font-family="Liberation Sans" font-size="16.5" fill="#444444" font-weight="normal" text-anchor="middle" >P</text>
<text x="1353" y="290" font-family="Liberation Sans" font-size="16.5" fill="#444444" font-weight="normal" text-anchor="middle" >Q</text>
<text x="1433" y="290" font-family="Liberation Sans" font-size="16.5" fill="#444444" font-weight="normal" text-anchor="middle" >R</text>
<text x="1513" y="290" font-family="Liberation Sans" font-size="16.5" fill="#444444" font-weight="normal" text-anchor="middle" >S</text>
<text x="1593" y="290" font-family="Liberation Sans" font-size="16.5" fill="#444444" font-weight="normal" text-anchor="middle" >T</text>
<text x="1673" y="290" font-family="Liberation Sans" font-size="16.5" fill="#444444" font-weight="normal" text-anchor="middle" >U</text>
<text x="1753" y="290" font-family="Liberation Sans" font-size="16.5" fill="#444444" font-weight="normal" text-anchor="middle" >V</text>
<text x="1833" y="290" font-family="Liberation Sans" font-size="16.5" fill="#444444" font-weight="normal" text-anchor="middle" >W</text>
<line x1="113.5" y1="274" x2="113.5" y2="295" stroke="#dedede" stroke-width="1" />
<line x1="193.5" y1="274" x2="193.5" y2="295" stroke="#dedede" stroke-width="1" />
<line x1="273.5" y1="274" x2="273.5" y2="295" stroke="#dedede" stroke-width="1" />
<line x1="353.5" y1="274" x2="353.5" y2="295" stroke="#dedede" stroke-width="1" />
<line x1="433.5" y1="274" x2="433.5" y2="295" stroke="#dedede" stroke-width="1" />
<line x1="513.5" y1="274" x2="513.5" y2="295" stroke="#dedede" stroke-width="1" />
<line x1="593.5" y1="274" x2="593.5" y2="295" stroke="#dedede" stroke-width="1" />
<line x1="673.5" y1="274" x2="673.5" y2="295" stroke="#dedede" stroke-width="1" />
<line x1="753.5" y1="274" x2="753.5" y2="295" stroke="#dedede" stroke-width="1" />
<line x1="833.5" y1="274" x2="833.5" y2="295" stroke="#dedede" stroke-width="1" />
<line x1="913.5" y1="274" x2="913.5" y2="295" stroke="#dedede" stroke-width="1" />
<line x1="993.5" y1="274" x2="993.5" y2="295" stroke="#dedede" stroke-width="1" />
<line x1="1073.5" y1="274" x2="1073.5" y2="295" stroke="#dedede" stroke-width="1" />
<line x1="1153.5" y1="274" x2="1153.5" y2="295" stroke="#dedede" stroke-width="1" />
<line x1="1233.5" y1="274" x2="1233.5" y2="295" stroke="#dedede" stroke-width="1" />
<line x1="1313.5" y1="274" x2="1313.5" y2="295" stroke="#dedede" stroke-width="1" />
<line x1="1393.5" y1="274" x2="1393.5" y2="295" stroke="#dedede" stroke-width="1" />
<line x1="1473.5" y1="274" x2="1473.5" y2="295" stroke="#dedede" stroke-width="1" />
<line x1="1553.5" y1="274" x2="1553.5" y2="295" stroke="#dedede" stroke-width="1" />
<line x1="1633.5" y1="274" x2="1633.5" y2="295" stroke="#dedede" stroke-width="1" />
<line x1="1713.5" y1="274" x2="1713.5" y2="295" stroke="#dedede" stroke-width="1" />
<line x1="1793.5" y1="274" x2="1793.5" y2="295" stroke="#dedede" stroke-width="1" />
<line x1="1873.5" y1="274" x2="1873.5" y2="295" stroke="#dedede" stroke-width="1" />
<line x1="0" y1="295.5" x2="1894" y2="295.5" stroke="#9e9e9e" stroke-width="1" />
<rect x="0" y="296" width="33" height="667" fill="#f0f0f0" />
<rect x="0" y="296" width="33" height="23" fill="#e1e1e1" />
<text x="16.5" y="314" font-family="Liberation Sans" font-size="16.5" fill="#185c37" font-weight="normal" text-anchor="middle" >1</text>
<text x="16.5" y="338" font-family="Liberation Sans" font-size="16.5" fill="#444444" font-weight="normal" text-anchor="middle" >2</text>
<line x1="0" y1="319.5" x2="33" y2="319.5" stroke="#dedede" stroke-width="1" />
<text x="16.5" y="362" font-family="Liberation Sans" font-size="16.5" fill="#444444" font-weight="normal" text-anchor="middle" >3</text>
<line x1="0" y1="343.5" x2="33" y2="343.5" stroke="#dedede" stroke-width="1" />
<text x="16.5" y="386" font-family="Liberation Sans" font-size="16.5" fill="#444444" font-weight="normal" text-anchor="middle" >4</text>
<line x1="0" y1="367.5" x2="33" y2="367.5" stroke="#dedede" stroke-width="1" />
<text x="16.5" y="410" font-family="Liberation Sans" font-size="16.5" fill="#444444" font-weight="normal" text-anchor="middle" >5</text>
<line x1="0" y1="391.5" x2="33" y2="391.5" stroke="#dedede" stroke-width="1" />
<text x="16.5" y="434" font-family="Liberation Sans" font-size="16.5" fill="#444444" font-weight="normal" text-anchor="middle" >6</text>
<line x1="0" y1="415.5" x2="33" y2="415.5" stroke="#dedede" stroke-width="1" />
<text x="16.5" y="458" font-family="Liberation Sans" font-size="16.5" fill="#444444" font-weight="normal" text-anchor="middle" >7</text>
<line x1="0" y1="439.5" x2="33" y2="439.5" stroke="#dedede" stroke-width="1" />
<text x="16.5" y="482" font-family="Liberation Sans" font-size="16.5" fill="#444444" font-weight="normal" text-anchor="middle" >8</text>
<line x1="0" y1="463.5" x2="33" y2="463.5" stroke="#dedede" stroke-width="1" />
<text x="16.5" y="506" font-family="Liberation Sans" font-size="16.5" fill="#444444" font-weight="normal" text-anchor="middle" >9</text>
<line x1="0" y1="487.5" x2="33" y2="487.5" stroke="#dedede" stroke-width="1" />
<text x="16.5" y="530" font-family="Liberation Sans" font-size="16.5" fill="#444444" font-weight="normal" text-anchor="middle" >10</text>
<line x1="0" y1="511.5" x2="33" y2="511.5" stroke="#dedede" stroke-width="1" />
<text x="16.5" y="554" font-family="Liberation Sans" font-size="16.5" fill="#444444" font-weight="normal" text-anchor="middle" >11</text>
<line x1="0" y1="535.5" x2="33" y2="535.5" stroke="#dedede" stroke-width="1" />
<text x="16.5" y="578" font-family="Liberation Sans" font-size="16.5" fill="#444444" font-weight="normal" text-anchor="middle" >12</text>
<line x1="0" y1="559.5" x2="33" y2="559.5" stroke="#dedede" stroke-width="1" />
<text x="16.5" y="602" font-family="Liberation Sans" font-size="16.5" fill="#444444" font-weight="normal" text-anchor="middle" >13</text>
<line x1="0" y1="583.5" x2="33" y2="583.5" stroke="#dedede" stroke-width="1" />
<text x="16.5" y="626" font-family="Liberation Sans" font-size="16.5" fill="#444444" font-weight="normal" text-anchor="middle" >14</text>
<line x1="0" y1="607.5" x2="33" y2="607.5" stroke="#dedede" stroke-width="1" />
<text x="16.5" y="650" font-family="Liberation Sans" font-size="16.5" fill="#444444" font-weight="normal" text-anchor="middle" >15</text>
<line x1="0" y1="631.5" x2="33" y2="631.5" stroke="#dedede" stroke-width="1" />
<text x="16.5" y="674" font-family="Liberation Sans" font-size="16.5" fill="#444444" font-weight="normal" text-anchor="middle" >16</text>
<line x1="0" y1="655.5" x2="33" y2="655.5" stroke="#dedede" stroke-width="1" />
<text x="16.5" y="698" font-family="Liberation Sans" font-size="16.5" fill="#444444" font-weight="normal" text-anchor="middle" >17</text>
<line x1="0" y1="679.5" x2="33" y2="679.5" stroke="#dedede" stroke-width="1" />
<text x="16.5" y="722" font-family="Liberation Sans" font-size="16.5" fill="#444444" font-weight="normal" text-anchor="middle" >18</text>
<line x1="0" y1="703.5" x2="33" y2="703.5" stroke="#dedede" stroke-width="1" />
<text x="16.5" y="746" font-family="Liberation Sans" font-size="16.5" fill="#444444" font-weight="normal" text-anchor="middle" >19</text>
<line x1="0" y1="727.5" x2="33" y2="727.5" stroke="#dedede" stroke-width="1" />
<text x="16.5" y="770" font-family="Liberation Sans" font-size="16.5" fill="#444444" font-weight="normal" text-anchor="middle" >20</text>
<line x1="0" y1="751.5" x2="33" y2="751.5" stroke="#dedede" stroke-width="1" />
<text x="16.5" y="794" font-family="Liberation Sans" font-size="16.5" fill="#444444" font-weight="normal" text-anchor="middle" >21</text>
<line x1="0" y1="775.5" x2="33" y2="775.5" stroke="#dedede" stroke-width="1" />
<text x="16.5" y="818" font-family="Liberation Sans" font-size="16.5" fill="#444444" font-weight="normal" text-anchor="middle" >22</text>
<line x1="0" y1="799.5" x2="33" y2="799.5" stroke="#dedede" stroke-width="1" />
<text x="16.5" y="842" font-family="Liberation Sans" font-size="16.5" fill="#444444" font-weight="normal" text-anchor="middle" >23</text>
<line x1="0" y1="823.5" x2="33" y2="823.5" stroke="#dedede" stroke-width="1" />
<text x="16.5" y="866" font-family="Liberation Sans" font-size="16.5" fill="#444444" font-weight="normal" text-anchor="middle" >24</text>
<line x1="0" y1="847.5" x2="33" y2="847.5" stroke="#dedede" stroke-width="1" />
<text x="16.5" y="890" font-family="Liberation Sans" font-size="16.5" fill="#444444" font-weight="normal" text-anchor="middle" >25</text>
<line x1="0" y1="871.5" x2="33" y2="871.5" stroke="#dedede" stroke-width="1" />
<text x="16.5" y="914" font-family="Liberation Sans" font-size="16.5" fill="#444444" font-weight="normal" text-anchor="middle" >26</text>
<line x1="0" y1="895.5" x2="33" y2="895.5" stroke="#dedede" stroke-width="1" />
<text x="16.5" y="938" font-family="Liberation Sans" font-size="16.5" fill="#444444" font-weight="normal" text-anchor="middle" >27</text>
<line x1="0" y1="919.5" x2="33" y2="919.5" stroke="#dedede" stroke-width="1" />
<text x="16.5" y="962" font-family="Liberation Sans" font-size="16.5" fill="#444444" font-weight="normal" text-anchor="middle" >28</text>
<line x1="0" y1="943.5" x2="33" y2="943.5" stroke="#dedede" stroke-width="1" />
<line x1="33.5" y1="274" x2="33.5" y2="295" stroke="#d6d6d6" stroke-width="1" />
<line x1="33.5" y1="295" x2="33.5" y2="963" stroke="#9e9e9e" stroke-width="1" />
<rect x="34" y="296" width="1860" height="667" fill="#fff" />
<line x1="113.5" y1="296" x2="113.5" y2="963" stroke="#dadada" stroke-width="1" />
<line x1="193.5" y1="296" x2="193.5" y2="963" stroke="#dadada" stroke-width="1" />
<line x1="273.5" y1="296" x2="273.5" y2="963" stroke="#dadada" stroke-width="1" />
<line x1="353.5" y1="296" x2="353.5" y2="963" stroke="#dadada" stroke-width="1" />
<line x1="433.5" y1="296" x2="433.5" y2="963" stroke="#dadada" stroke-width="1" />
<line x1="513.5" y1="296" x2="513.5" y2="963" stroke="#dadada" stroke-width="1" />
<line x1="593.5" y1="296" x2="593.5" y2="963" stroke="#dadada" stroke-width="1" />
<line x1="673.5" y1="296" x2="673.5" y2="963" stroke="#dadada" stroke-width="1" />
<line x1="753.5" y1="296" x2="753.5" y2="963" stroke="#dadada" stroke-width="1" />
<line x1="833.5" y1="296" x2="833.5" y2="963" stroke="#dadada" stroke-width="1" />
<line x1="913.5" y1="296" x2="913.5" y2="963" stroke="#dadada" stroke-width="1" />
<line x1="993.5" y1="296" x2="993.5" y2="963" stroke="#dadada" stroke-width="1" />
<line x1="1073.5" y1="296" x2="1073.5" y2="963" stroke="#dadada" stroke-width="1" />
<line x1="1153.5" y1="296" x2="1153.5" y2="963" stroke="#dadada" stroke-width="1" />
<line x1="1233.5" y1="296" x2="1233.5" y2="963" stroke="#dadada" stroke-width="1" />
<line x1="1313.5" y1="296" x2="1313.5" y2="963" stroke="#dadada" stroke-width="1" />
<line x1="1393.5" y1="296" x2="1393.5" y2="963" stroke="#dadada" stroke-width="1" />
<line x1="1473.5" y1="296" x2="1473.5" y2="963" stroke="#dadada" stroke-width="1" />
<line x1="1553.5" y1="296" x2="1553.5" y2="963" stroke="#dadada" stroke-width="1" />
<line x1="1633.5" y1="296" x2="1633.5" y2="963" stroke="#dadada" stroke-width="1" />
<line x1="1713.5" y1="296" x2="1713.5" y2="963" stroke="#dadada" stroke-width="1" />
<line x1="1793.5" y1="296" x2="1793.5" y2="963" stroke="#dadada" stroke-width="1" />
<line x1="1873.5" y1="296" x2="1873.5" y2="963" stroke="#dadada" stroke-width="1" />
<line x1="34" y1="319.5" x2="1894" y2="319.5" stroke="#dadada" stroke-width="1" />
<line x1="34" y1="343.5" x2="1894" y2="343.5" stroke="#dadada" stroke-width="1" />
<line x1="34" y1="367.5" x2="1894" y2="367.5" stroke="#dadada" stroke-width="1" />
<line x1="34" y1="391.5" x2="1894" y2="391.5" stroke="#dadada" stroke-width="1" />
<line x1="34" y1="415.5" x2="1894" y2="415.5" stroke="#dadada" stroke-width="1" />
<line x1="34" y1="439.5" x2="1894" y2="439.5" stroke="#dadada" stroke-width="1" />
<line x1="34" y1="463.5" x2="1894" y2="463.5" stroke="#dadada" stroke-width="1" />
<line x1="34" y1="487.5" x2="1894" y2="487.5" stroke="#dadada" stroke-width="1" />
<line x1="34" y1="511.5" x2="1894" y2="511.5" stroke="#dadada" stroke-width="1" />
<line x1="34" y1="535.5" x2="1894" y2="535.5" stroke="#dadada" stroke-width="1" />
<line x1="34" y1="559.5" x2="1894" y2="559.5" stroke="#dadada" stroke-width="1" />
<line x1="34" y1="583.5" x2="1894" y2="583.5" stroke="#dadada" stroke-width="1" />
<line x1="34" y1="607.5" x2="1894" y2="607.5" stroke="#dadada" stroke-width="1" />
<line x1="34" y1="631.5" x2="1894" y2="631.5" stroke="#dadada" stroke-width="1" />
<line x1="34" y1="655.5" x2="1894" y2="655.5" stroke="#dadada" stroke-width="1" />
<line x1="34" y1="679.5" x2="1894" y2="679.5" stroke="#dadada" stroke-width="1" />
<line x1="34" y1="703.5" x2="1894" y2="703.5" stroke="#dadada" stroke-width="1" />
<line x1="34" y1="727.5" x2="1894" y2="727.5" stroke="#dadada" stroke-width="1" />
<line x1="34" y1="751.5" x2="1894" y2="751.5" stroke="#dadada" stroke-width="1" />
<line x1="34" y1="775.5" x2="1894" y2="775.5" stroke="#dadada" stroke-width="1" />
<line x1="34" y1="799.5" x2="1894" y2="799.5" stroke="#dadada" stroke-width="1" />
<line x1="34" y1="823.5" x2="1894" y2="823.5" stroke="#dadada" stroke-width="1" />
<line x1="34" y1="847.5" x2="1894" y2="847.5" stroke="#dadada" stroke-width="1" />
<line x1="34" y1="871.5" x2="1894" y2="871.5" stroke="#dadada" stroke-width="1" />
<line x1="34" y1="895.5" x2="1894" y2="895.5" stroke="#dadada" stroke-width="1" />
<line x1="34" y1="919.5" x2="1894" y2="919.5" stroke="#dadada" stroke-width="1" />
<line x1="34" y1="943.5" x2="1894" y2="943.5" stroke="#dadada" stroke-width="1" />
<rect x="194" y="464" width="79" height="23" fill="#22b14c" />
<rect x="194" y="488" width="79" height="23" fill="#22b14c" />
<rect x="194" y="512" width="79" height="23" fill="#22b14c" />
<rect x="194" y="536" width="79" height="23" fill="#22b14c" />
<rect x="194" y="608" width="79" height="23" fill="#22b14c" />
<rect x="194" y="632" width="79" height="23" fill="#22b14c" />
<rect x="194" y="656" width="79" height="23" fill="#22b14c" />
<rect x="194" y="680" width="79" height="23" fill="#22b14c" />
<rect x="194" y="704" width="79" height="23" fill="#22b14c" />
<rect x="194" y="728" width="79" height="23" fill="#22b14c" />
<rect x="194" y="752" width="79" height="23" fill="#22b14c" />
<rect x="194" y="464" width="79" height="23" fill="#22b14c" />
<rect x="34" y="560" width="79" height="23" fill="#00a2e8" />
<rect x="114" y="560" width="79" height="23" fill="#00a2e8" />
<rect x="194" y="560" width="79" height="23" fill="#00a2e8" />
<rect x="274" y="560" width="79" height="23" fill="#00a2e8" />
<rect x="354" y="560" width="79" height="23" fill="#00a2e8" />
<rect x="34" y="584" width="79" height="23" fill="#00a2e8" />
<rect x="114" y="584" width="79" height="23" fill="#00a2e8" />
<rect x="194" y="584" width="79" height="23" fill="#00a2e8" />
<rect x="274" y="584" width="79" height="23" fill="#00a2e8" />
<rect x="354" y="584" width="79" height="23" fill="#00a2e8" />
<rect x="33.5" y="295.5" width="80" height="24" fill="none" stroke="#1e6c41" stroke-width="2" />
<rect x="110.5" y="316" width="6" height="6" fill="#1e6c41" stroke="#fff" stroke-width="1" />
<text x="47" y="311" font-family="Liberation Sans" font-size="17" fill="#000" font-weight="bold" text-anchor="start" textLength="30" lengthAdjust="spacingAndGlyphs" >Cell</text>
<text x="77" y="369" font-family="Liberation Sans" font-size="17" fill="#000" font-weight="bold" text-anchor="start" textLength="72" lengthAdjust="spacingAndGlyphs" >Columns</text>
<text x="199" y="435" font-family="Liberation Sans" font-size="17" fill="#000" font-weight="bold" text-anchor="start" textLength="44" lengthAdjust="spacingAndGlyphs" >Rows</text>
<path d="M63 358.5 H69 V399 H75.5 L63 440 L50.5 399 H57 V358.5 Z" fill="#22b14c" stroke="#000" stroke-width="5" stroke-linejoin="round"/>
<line x1="59" y1="367.5" x2="67" y2="367.5" stroke="#fff" stroke-width="1" />
<line x1="59" y1="391.5" x2="67" y2="391.5" stroke="#fff" stroke-width="1" />
<line x1="59" y1="415.5" x2="67" y2="415.5" stroke="#fff" stroke-width="1" />
<path d="M71 423.5 H119 V418 L164.5 429 L119 440 V433.5 H71 Z" fill="#00a2e8" stroke="#000" stroke-width="5" stroke-linejoin="round"/>
<line x1="113.5" y1="426" x2="113.5" y2="431" stroke="#fff" stroke-width="1" />
<rect x="511.5" y="426.5" width="809" height="465" fill="none" stroke="#3f48cc" stroke-width="3" />
<text x="774" y="659" font-family="Liberation Serif" font-size="44" fill="#3f48cc" font-weight="bold" text-anchor="start" textLength="208" lengthAdjust="spacingAndGlyphs" >Workspace</text>
<circle cx="907.5" cy="583.5" r="0.8" fill="#333"/><circle cx="911" cy="578" r="0.5" fill="#888"/>
<text x="300" y="760" font-family="Liberation Serif" font-size="22" fill="#000" font-weight="bold" text-anchor="start" textLength="82" lengthAdjust="spacingAndGlyphs" >Cell grid</text>
<text x="1454" y="413" font-family="Liberation Serif" font-size="23" fill="#3f48cc" font-weight="bold" text-anchor="start" textLength="105" lengthAdjust="spacingAndGlyphs" >Ribon Tab</text>
<path d="M1492.5 237 L1514 306 H1504.5 V382.5 H1481.5 V306 H1471.5 Z" fill="none" stroke="#22b14c" stroke-width="7" stroke-linejoin="round"/>
<rect x="1894" y="272" width="26" height="691" fill="#f0f0f0" />
<rect x="1897" y="272" width="20" height="690" fill="#f8f8f8" rx="10" />
<path d="M1902 287 L1907.5 278.5 L1913 287 Z" fill="#737373" stroke="#737373" stroke-width="1" stroke-linejoin="round"/>
<rect x="1902" y="293" width="11" height="21" fill="#737373" rx="5.5" />
<path d="M1902 952 L1907.5 960 L1913 952 Z" fill="#737373" stroke="#737373" stroke-width="1" stroke-linejoin="round"/>
<rect x="0" y="963" width="1920" height="40" fill="#f0f0f0" />
<line x1="0" y1="963.5" x2="1894" y2="963.5" stroke="#d4d4d4" stroke-width="1" />
<path d="M38.5 976.5 L32.5 982.5 L38.5 988.5" fill="none" stroke="#9a9a9a" stroke-width="1.2" />
<path d="M73.5 976.5 L79.5 982.5 L73.5 988.5" fill="none" stroke="#9a9a9a" stroke-width="1.2" />
<path d="M140.5 964 H213 V994 Q213 998.5 208.5 998.5 H145 Q140.5 998.5 140.5 994 Z" fill="#ffffff" stroke="#e0e0e0" stroke-width="1"/>
<text x="151" y="986" font-family="Liberation Sans" font-size="17" fill="#242424" font-weight="normal" text-anchor="start" textLength="52" lengthAdjust="spacingAndGlyphs" stroke="#242424" stroke-width="0.5">Sheet1</text>
<rect x="151" y="993" width="52" height="2.5" fill="#0e6b38" />
<line x1="218.5" y1="971" x2="218.5" y2="995" stroke="#c8c8c8" stroke-width="1" />
<path d="M278.5 975 V989.5 M271 982.5 H286" fill="none" stroke="#424242" stroke-width="1.3" />
<text x="360" y="993" font-family="Liberation Serif" font-size="23" fill="#3f48cc" font-weight="bold" text-anchor="start" textLength="110" lengthAdjust="spacingAndGlyphs" >Sheet Tabs</text>
<rect x="1154.5" y="976" width="2.5" height="2.5" fill="#424242" />
<rect x="1154.5" y="981" width="2.5" height="2.5" fill="#424242" />
<rect x="1154.5" y="986" width="2.5" height="2.5" fill="#424242" />
<rect x="1177" y="971.5" width="720" height="21" fill="#f8f8f8" rx="10.5" />
<path d="M1190 977.5 L1183 982.5 L1190 987.5 Z" fill="#737373" stroke="#737373" stroke-linejoin="round"/>
<rect x="1197" y="976.5" width="649" height="11.5" fill="#737373" rx="5.75" />
<path d="M1883 977.5 L1890 982.5 L1883 987.5 Z" fill="#737373" stroke="#737373" stroke-linejoin="round"/>
<rect x="0" y="1003" width="1920" height="27" fill="#f4f4f4" />
<text x="15" y="1022" font-family="Liberation Sans" font-size="13.5" fill="#424242" font-weight="normal" text-anchor="start" textLength="36" lengthAdjust="spacingAndGlyphs" >Ready</text>
<g stroke="#424242" stroke-width="1.2" fill="none" stroke-linecap="round" stroke-linejoin="round"><circle cx="84" cy="1010.5" r="2.3"/><path d="M76.5 1011 Q78 1015 82 1015 H86 Q90 1015 91 1011"/><path d="M82 1015 V1019 Q80 1021 80.5 1024 Q81.5 1026.5 84 1025.5"/><path d="M86 1015 V1018"/><path d="M85.5 1022 L88.5 1025.5 L94 1018.5"/></g>
<text x="97" y="1022" font-family="Liberation Sans" font-size="13.5" fill="#424242" font-weight="normal" text-anchor="start" textLength="144" lengthAdjust="spacingAndGlyphs" >Accessibility: Good to go</text>
<rect x="1548" y="1004" width="50" height="26" fill="#e0e0e0" />
<g fill="none" stroke="#424242" stroke-width="1.3"><rect x="1565" y="1009" width="15" height="15"/><path d="M1570 1009 V1024 M1575 1009 V1024 M1565 1014 H1580 M1565 1019 H1580"/><rect x="1615" y="1009" width="17" height="16"/><rect x="1619" y="1012.5" width="9" height="9"/><path d="M1620.5 1015.5 H1626.5 M1620.5 1018.5 H1626.5"/><rect x="1665" y="1009" width="17" height="16"/><path d="M1665 1018 H1676 V1009 M1670 1009 V1014"/></g>
<line x1="1705" y1="1016.5" x2="1714" y2="1016.5" stroke="#424242" stroke-width="1.2" />
<line x1="1721" y1="1017.5" x2="1846" y2="1017.5" stroke="#8a8a8a" stroke-width="1" />
<rect x="1781" y="1010" width="6" height="14" fill="#6a6a6a" rx="1" />
<path d="M1851 1016.5 H1861 M1856 1011.5 V1021.5" fill="none" stroke="#424242" stroke-width="1.2" />
<text x="1879" y="1022" font-family="Liberation Sans" font-size="13" fill="#424242" font-weight="normal" text-anchor="start" textLength="30" lengthAdjust="spacingAndGlyphs" >100%</text>
<defs><linearGradient id="tb" x1="0" x2="1" y1="0" y2="0"><stop offset="0" stop-color="#1c2933"/><stop offset="0.3" stop-color="#21232d"/><stop offset="0.55" stop-color="#23272d"/><stop offset="0.8" stop-color="#1d2a33"/><stop offset="1" stop-color="#1b2832"/></linearGradient></defs>
<rect x="0" y="1030" width="1920" height="50" fill="url(#tb)" />
<g fill="#ffffff"><path d="M20 1047.5 L28.5 1046.3 V1054.5 H20 Z"/><path d="M29.7 1046.1 L40 1044.7 V1054.5 H29.7 Z"/><path d="M20 1055.7 H28.5 V1064 L20 1062.8 Z"/><path d="M29.7 1055.7 H40 V1065.4 L29.7 1064 Z"/></g>
<rect x="60" y="1030" width="360" height="50" fill="#f0f0f0" />
<rect x="60.5" y="1030.5" width="359" height="49" fill="none" stroke="#b8b8b8" stroke-width="1" />
<g stroke="#1f1f1f" stroke-width="1.5" fill="none"><circle cx="87.5" cy="1052.5" r="6.5"/><line x1="83" y1="1057" x2="75.5" y2="1064.5"/></g>
<text x="110" y="1061.5" font-family="Liberation Sans" font-size="17.5" fill="#1f1f1f" font-weight="normal" text-anchor="start" textLength="163" lengthAdjust="spacingAndGlyphs" >Type here to search</text>
<g stroke="#fff" stroke-width="1.2" fill="none"><rect x="441" y="1050.5" width="11" height="9"/><path d="M440 1045.5 H453 M440 1064.5 H453 M441 1045.5 V1048 M452 1045.5 V1048 M441 1064.5 V1062 M452 1064.5 V1062"/><path d="M458.5 1045 V1065"/></g><rect x="456.5" y="1052" width="4" height="4" fill="#fff"/>
<defs><linearGradient id="edg" x1="0" y1="0" x2="1" y2="1"><stop offset="0" stop-color="#35c1f1"/><stop offset="0.6" stop-color="#1e90e0"/><stop offset="1" stop-color="#0c59a4"/></linearGradient><linearGradient id="edg2" x1="0" y1="0" x2="1" y2="0"><stop offset="0" stop-color="#2fb4e8"/><stop offset="1" stop-color="#66eb6e"/></linearGradient></defs>
<defs><linearGradient id="edg3" x1="0" y1="0" x2="1" y2="1"><stop offset="0" stop-color="#1aa0ea"/><stop offset="1" stop-color="#0b4f9e"/></linearGradient></defs>
<circle cx="514" cy="1055" r="15" fill="url(#edg2)"/><path d="M499.2 1052 C 501 1046, 507 1044.5, 512 1047.5 C 509 1050, 509.5 1056, 513 1059 C 517 1062, 523 1063, 527.8 1062 A15 15 0 0 1 499.2 1052 Z" fill="url(#edg3)"/><circle cx="514.5" cy="1054" r="3.6" fill="#22232e"/><path d="M515.5 1056.5 C 518 1059.5, 523 1060.3, 528.7 1058.6 L 528 1061.8 C 522 1063.2, 516 1062.3, 512.5 1058.5 Z" fill="#22232e"/>
<path d="M562 1044 H571 L573 1046 H590 V1066 H562 Z" fill="#e8a70f"/><rect x="562" y="1048" width="28" height="18" rx="1" fill="#ffd75e"/><path d="M567 1066 V1055 H585 V1066 H581 V1059 H571 V1066 Z" fill="#3a96dd"/>
<path d="M630 1045 V1042 H645 V1045" fill="none" stroke="#35b7f3" stroke-width="2"/><rect x="623" y="1045" width="29" height="25" rx="3" fill="#f5f5f5"/><rect x="632" y="1052" width="5" height="5" fill="#f25022"/><rect x="638" y="1052" width="5" height="5" fill="#7fba00"/><rect x="632" y="1058" width="5" height="5" fill="#00a4ef"/><rect x="638" y="1058" width="5" height="5" fill="#ffb900"/>
<path d="M685 1049 L700 1042 L715 1049 V1066 H685 Z" fill="#ffffff"/><path d="M685 1050 L715 1050 L701 1055 L708 1062 L697 1055 Z" fill="#1e2430"/>
<rect x="753" y="1041" width="23" height="27" rx="2" fill="#2b7cd3"/><rect x="753" y="1050" width="23" height="9" fill="#185abd"/><rect x="753" y="1059" width="23" height="9" rx="1" fill="#103f91"/><rect x="753" y="1041" width="23" height="9" rx="1" fill="#41a5ee"/><rect x="746" y="1046" width="15" height="15" rx="1.5" fill="#185abd"/>
<text x="753.5" y="1058" font-family="Liberation Sans" font-weight="bold" font-size="11" fill="#fff" text-anchor="middle">W</text>
<rect x="794" y="1030" width="61" height="50" fill="#4c545b" />
<rect x="794" y="1077" width="61" height="3" fill="#76b9ed" />
<rect x="816" y="1041" width="22" height="27" rx="2" fill="#21a366"/><rect x="816" y="1041" width="22" height="9" rx="1" fill="#33c481"/><rect x="816" y="1059" width="22" height="9" rx="1" fill="#185c37"/><rect x="827" y="1050" width="11" height="9" fill="#107c41"/><rect x="809" y="1046" width="15" height="15" rx="1.5" fill="#107c41"/><path d="M813 1049.5 L820 1057.5 M820 1049.5 L813 1057.5" stroke="#fff" stroke-width="1.8"/>
<path d="M893 1041 L901 1045 V1065 L893 1069 L879 1056 L873 1061 L871 1059.5 V1050.5 L873 1049 L879 1054 Z" fill="#1f9cf0"/><path d="M893 1048 V1062 L884 1055 Z" fill="#22252f"/><path d="M893 1041 L901 1045 V1065 L893 1069 Z" fill="#0065a9" opacity="0.6"/>
<circle cx="948" cy="1055" r="15" fill="#db4437"/><path d="M948 1055 L961 1047.5 A15 15 0 0 1 955.5 1068 Z" fill="#fcc934"/><path d="M948 1055 L955.5 1068 A15 15 0 0 1 935 1047.5 Z" fill="#1e8e3e"/><path d="M948 1055 L935 1047.5 A15 15 0 0 1 961 1047.5 Z" fill="#db4437"/><circle cx="948" cy="1055" r="6.5" fill="#fff"/><circle cx="948" cy="1055" r="5" fill="#1a73e8"/>
<path d="M1010 1041 A14 14 0 1 1 1003 1067.5 L996 1069.5 L998.5 1062.5 A14 14 0 0 1 1010 1041 Z" fill="#25d366"/><path d="M1010 1044 A11 11 0 1 1 1004 1064 L999.5 1065.5 L1001 1061 A11 11 0 0 1 1010 1044 Z" fill="#22252f"/><path d="M1004 1049 Q1006 1047 1007 1049 L1008 1052 Q1007 1054 1008 1055 Q1010 1058 1013 1059 Q1014 1058 1015 1057 L1018 1059 Q1018 1062 1015 1062 Q1008 1061 1004 1054 Q1003 1051 1004 1049 Z" fill="#25d366"/>
<circle cx="1072" cy="1055" r="15" fill="#1877f2"/><path d="M1069 1070 V1058 H1065 V1053.5 H1069 V1049.5 Q1069 1044 1074.5 1044 Q1077 1044 1078 1044.3 V1048.2 H1075.5 Q1073.5 1048.2 1073.5 1050.3 V1053.5 H1078 L1077.3 1058 H1073.5 V1070 Z" fill="#fff"/>
<rect x="1121" y="1042" width="22" height="25" rx="1" fill="#0a7ad4"/><rect x="1123" y="1043" width="20" height="21" fill="#37b0ec"/><rect x="1127" y="1043" width="12" height="3" fill="#80d4f8"/><circle cx="1149.5" cy="1064" r="11" fill="#2a2d35" stroke="#b0b0b0" stroke-width="1"/>
<text x="1149.5" y="1069.5" font-family="Liberation Sans" font-size="14" fill="#fff" text-anchor="middle">43</text>
<path d="M1196 1041 L1207 1045.5 L1211 1056 L1207 1065 L1196 1069 L1185 1065 L1181 1056 L1185 1045.5 Z" fill="#1b2550" stroke="#c7cbd6" stroke-width="1.5"/><path d="M1187 1050 L1191 1062 L1196 1054 L1201 1062 L1205 1050" stroke="#fff" stroke-width="2.5" fill="none"/>
<rect x="1172" y="1077" width="50" height="3" fill="#76b9ed" />
<g stroke="#fff" stroke-width="1.3" fill="none"><rect x="1358.5" y="1045.5" width="28" height="19" rx="2"/><rect x="1362" y="1050" width="9" height="9"/><path d="M1374 1050 H1383 M1374 1054.5 H1383 M1374 1059 H1383 M1386.5 1049 H1389 V1062.5"/></g>
<text x="1398" y="1062" font-family="Liberation Sans" font-size="17" fill="#ffffff" font-weight="normal" text-anchor="start" textLength="37" lengthAdjust="spacingAndGlyphs" >28°C</text>
<text x="1446" y="1062" font-family="Liberation Sans" font-size="17" fill="#ffffff" font-weight="normal" text-anchor="start" textLength="105" lengthAdjust="spacingAndGlyphs" >Mostly sunny</text>
<path d="M1582 1058 L1590 1050 L1598 1058" fill="none" stroke="#fff" stroke-width="1.3" />
<g stroke="#fff" stroke-width="1.1" fill="none"><rect x="1614" y="1049" width="9" height="11" rx="2"/><path d="M1623 1052 L1628 1049 V1060 L1623 1057"/><path d="M1615 1046 Q1619 1044 1622 1046 M1615 1063 Q1619 1065 1622 1063"/></g>
<g stroke="#fff" stroke-width="1.2" fill="none"><rect x="1641.5" y="1049.5" width="16" height="10"/></g><rect x="1643.5" y="1051.5" width="6" height="6" fill="#fff"/><rect x="1658" y="1052" width="2" height="5" fill="#fff"/>
<g stroke="#fff" stroke-width="1.1" fill="none"><circle cx="1680" cy="1055" r="9.5"/><ellipse cx="1680" cy="1055" rx="4" ry="9.5"/><path d="M1670.5 1055 H1689.5 M1672 1050 H1688 M1672 1060 H1688"/></g><circle cx="1686.5" cy="1061.5" r="4" fill="#1d2a33" stroke="#fff" stroke-width="1.1"/><path d="M1684 1064 L1689 1059" stroke="#fff" stroke-width="1"/>
<g stroke="#fff" stroke-width="1.1" fill="none"><path d="M1700.5 1051 H1704 L1709 1046.5 V1063.5 L1704 1059 H1700.5 Z"/><path d="M1712 1052 Q1714 1055 1712 1058"/></g><g stroke="#8a8f96" stroke-width="1.1" fill="none"><path d="M1715 1049 Q1719 1055 1715 1061 M1718 1046 Q1724 1055 1718 1064"/></g>
<text x="1733" y="1061" font-family="Liberation Sans" font-size="15" fill="#ffffff" font-weight="normal" text-anchor="start" textLength="29" lengthAdjust="spacingAndGlyphs" >ENG</text>
<text x="1782" y="1050" font-family="Liberation Sans" font-size="15" fill="#ffffff" font-weight="normal" text-anchor="start" textLength="61" lengthAdjust="spacingAndGlyphs" >10:42 AM</text>
<text x="1782" y="1072" font-family="Liberation Sans" font-size="15" fill="#ffffff" font-weight="normal" text-anchor="start" textLength="60" lengthAdjust="spacingAndGlyphs" >9/9/2024</text>
<path d="M1870 1046 H1892 V1062 H1880 L1874 1067 V1062 H1870 Z" fill="#fff"/><path d="M1874 1051 H1888 M1874 1055 H1888" stroke="#1d2a33" stroke-width="1.2"/><circle cx="1888" cy="1064" r="8" fill="#2a2d35" stroke="#9a9a9a" stroke-width="1"/>
<text x="1888" y="1069" font-family="Liberation Sans" font-size="13" fill="#fff" text-anchor="middle">1</text>
<line x1="1914.5" y1="1030" x2="1914.5" y2="1080" stroke="#5a6068" stroke-width="1" />
<path d="M160.5 229 V266.25 H274.5 V229" fill="none" stroke="#000" stroke-width="5"/>
<rect x="15.5" y="66.5" width="1898" height="165" rx="14" fill="none" stroke="#22b14c" stroke-width="7"/>
<rect x="9.75" y="224.75" width="122.5" height="42.5" fill="none" stroke="#22b14c" stroke-width="3.5"/>
<rect x="107.5" y="965.5" width="220" height="43.5" fill="none" stroke="#22b14c" stroke-width="3"/>
</svg>
</body></html>
